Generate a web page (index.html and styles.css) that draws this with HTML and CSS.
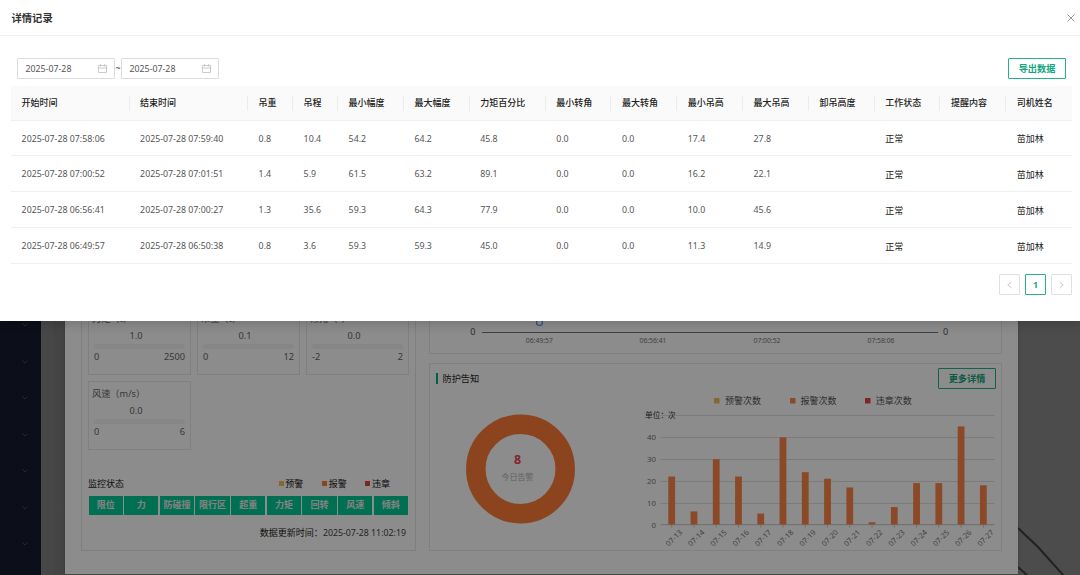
FILE: index.html
```
<!DOCTYPE html>
<html>
<head>
<meta charset="utf-8">
<title>详情记录</title>
<link rel="stylesheet" href="styles.css">
</head>
<body>
<div class="page">
  <div class="sidebar">
    <svg class="arrow" viewBox="0 0 6 4"><path d="M.5.5 3 3 5.500.5"/></svg>
    <svg class="arrow" viewBox="0 0 6 4"><path d="M.5.5 3 3 5.500.5"/></svg>
    <svg class="arrow" viewBox="0 0 6 4"><path d="M.5.5 3 3 5.500.5"/></svg>
    <svg class="arrow" viewBox="0 0 6 4"><path d="M.5.5 3 3 5.500.5"/></svg>
    <svg class="arrow" viewBox="0 0 6 4"><path d="M.5.5 3 3 5.500.5"/></svg>
    <svg class="arrow" viewBox="0 0 6 4"><path d="M.5.5 3 3 5.500.5"/></svg>
    <svg class="arrow" viewBox="0 0 6 4"><path d="M.5.5 3 3 5.500.5"/></svg>
  </div>
  <div class="stage">
    <div class="panel">
      <div class="monitor">
        <div class="cards">
          <div class="card"><div class="name">力矩（t）</div><div class="value">1.0</div><div class="bar"></div><div class="range"><span>0</span><span>2500</span></div></div>
          <div class="card"><div class="name">吊重（t）</div><div class="value">0.1</div><div class="bar"></div><div class="range"><span>0</span><span>12</span></div></div>
          <div class="card"><div class="name">倾角（°）</div><div class="value">0.0</div><div class="bar"></div><div class="range"><span>-2</span><span>2</span></div></div>
          <div class="card"><div class="name">风速（m/s）</div><div class="value">0.0</div><div class="bar"></div><div class="range"><span>0</span><span>6</span></div></div>
        </div>
        <div class="statehead">
          <span>监控状态</span>
          <div class="legend">
            <span><i class="yellow"></i>预警</span>
            <span><i class="orange"></i>报警</span>
            <span><i class="red"></i>违章</span>
          </div>
        </div>
        <div class="states">
          <span>限位</span><span>力</span><span>防碰撞</span><span>限行区</span><span>超重</span><span>力矩</span><span>回转</span><span>风速</span><span>倾斜</span>
        </div>
        <div class="update">数据更新时间：<span>2025-07-28 11:02:19</span></div>
      </div>
      <div class="right">
        <div class="box trend">
          <svg width="572" height="54" viewBox="430 300 572 54">
            <circle class="dot" cx="539.500" cy="323.500" r="3"/>
            <path class="axis" d="M482 333.500H938"/>
            <text class="num" x="475.500" y="336" text-anchor="end">0</text>
            <text class="num" x="943" y="336">0</text>
            <g class="time" text-anchor="middle">
              <text x="539.300" y="344.300">06:49:57</text>
              <text x="653" y="344.300">06:56:41</text>
              <text x="767" y="344.300">07:00:52</text>
              <text x="881" y="344.300">07:58:06</text>
            </g>
          </svg>
        </div>
        <div class="box notice">
          <div class="noticehead"><span class="title">防护告知</span><button class="btn more">更多详情</button></div>
          <svg class="charts" width="571" height="158" viewBox="430 392 571 158">
            <circle class="ring" cx="520.500" cy="469" r="44.700"/>
            <text class="total" x="517.500" y="464" text-anchor="middle">8</text>
            <text class="today" x="517.500" y="479.500" text-anchor="middle">今日告警</text>
            <rect class="yellow" x="714" y="398" width="5.500" height="5.500"/>
            <rect class="orange" x="790" y="398" width="5.500" height="5.500"/>
            <rect class="red" x="865" y="398" width="5.500" height="5.500"/>
            <g class="key">
              <text x="725" y="403.500">预警次数</text>
              <text x="800.500" y="403.500">报警次数</text>
              <text x="875.700" y="403.500">违章次数</text>
            </g>
            <path class="grid" d="M660.500 415.500H994.500M660.500 437.500H994.500M660.500 459.500H994.500M660.500 481.500H994.500M660.500 503.500H994.500"/>
            <text class="unit" x="645" y="418">单位：次</text>
            <g class="tick" text-anchor="end">
              <text x="656" y="440">40</text><text x="656" y="462">30</text><text x="656" y="484">20</text><text x="656" y="506">10</text><text x="656" y="527.500">0</text>
            </g>
            <path class="axis2" d="M660.500 524.700H994.500"/>
            <g id="bars"></g>
          </svg>
        </div>
      </div>
    </div>
    <svg class="wires" width="62" height="50" viewBox="1018 525 62 50"><path d="M1018 528 1038 547 1064 576M1018 567 1028 576"/></svg>
  </div>

  <div class="mask"></div>

  <div class="drawer">
    <div class="drawerhead">
      <span>详情记录</span>
      <svg class="close" viewBox="0 0 8 8"><path d="M.5.5 7.500 7.500M7.500.5.5 7.500"/></svg>
    </div>
    <div class="drawerbody">
      <div class="filters">
        <div class="date">2025-07-28<svg viewBox="0 0 9 9"><path d="M.5 1.500H8.500V8.500H.5ZM.5 4H8.500M2.500.2V2.500M6.500.2V2.500"/></svg></div>
        <span class="tilde">~</span>
        <div class="date">2025-07-28<svg viewBox="0 0 9 9"><path d="M.5 1.500H8.500V8.500H.5ZM.5 4H8.500M2.500.2V2.500M6.500.2V2.500"/></svg></div>
        <button class="btn export">导出数据</button>
      </div>
      <table class="records">
        <colgroup>
          <col class="c-time"><col class="c-time"><col class="c-small"><col class="c-small"><col><col><col class="c-pct"><col><col><col><col><col><col><col><col>
        </colgroup>
        <thead>
          <tr><th>开始时间</th><th>结束时间</th><th>吊重</th><th>吊程</th><th>最小幅度</th><th>最大幅度</th><th>力矩百分比</th><th>最小转角</th><th>最大转角</th><th>最小吊高</th><th>最大吊高</th><th>卸吊高度</th><th>工作状态</th><th>提醒内容</th><th>司机姓名</th></tr>
        </thead>
        <tbody>
          <tr><td>2025-07-28 07:58:06</td><td>2025-07-28 07:59:40</td><td>0.8</td><td>10.4</td><td>54.2</td><td>64.2</td><td>45.8</td><td>0.0</td><td>0.0</td><td>17.4</td><td>27.8</td><td></td><td>正常</td><td></td><td>苗加林</td></tr>
          <tr><td>2025-07-28 07:00:52</td><td>2025-07-28 07:01:51</td><td>1.4</td><td>5.9</td><td>61.5</td><td>63.2</td><td>89.1</td><td>0.0</td><td>0.0</td><td>16.2</td><td>22.1</td><td></td><td>正常</td><td></td><td>苗加林</td></tr>
          <tr><td>2025-07-28 06:56:41</td><td>2025-07-28 07:00:27</td><td>1.3</td><td>35.6</td><td>59.3</td><td>64.3</td><td>77.9</td><td>0.0</td><td>0.0</td><td>10.0</td><td>45.6</td><td></td><td>正常</td><td></td><td>苗加林</td></tr>
          <tr><td>2025-07-28 06:49:57</td><td>2025-07-28 06:50:38</td><td>0.8</td><td>3.6</td><td>59.3</td><td>59.3</td><td>45.0</td><td>0.0</td><td>0.0</td><td>11.3</td><td>14.9</td><td></td><td>正常</td><td></td><td>苗加林</td></tr>
        </tbody>
      </table>
      <div class="pager">
        <span class="off"><svg viewBox="0 0 5 8"><path d="M4.500 1 .8 4 4.500 7"/></svg></span>
        <span class="on">1</span>
        <span class="off"><svg viewBox="0 0 5 8"><path d="M.5 1 4.200 4 .5 7"/></svg></span>
      </div>
    </div>
  </div>
</div>
<script>
var counts = [22, 6, 30, 22, 5, 40, 24, 21, 17, 1, 8, 19, 19, 45, 18]
var out = ''
for (var i = 0; i < counts.length; i++) {
    var x = 671.7 + i * 22.26
    var h = counts[i] * 2.18
    out += '<rect class="orange" x="' + (x - 3.4) + '" y="' + (524.5 - h) + '" width="6.800" height="' + h + '"/>'
    out += '<path class="axis2" d="M' + x + ' 525v2.500"/>'
    out += '<text class="day" text-anchor="end" transform="translate(' + (x + 11) + ' 533) rotate(-45)">07-' + (13 + i) + '</text>'
}
document.getElementById('bars').innerHTML = out
</script>
</body>
</html>
```
FILE: styles.css
```
* {
    box-sizing: border-box;
}
body {
    margin: 0;
    font-family: "Noto Sans", "Noto Sans CJK SC", sans-serif;
    font-size: 8.8px;
    color: #333;
}
svg {
    display: block;
    fill: none;
}
.page {
    position: relative;
    display: flex;
    width: 1080px;
    height: 575px;
    overflow: hidden;
    background: #8a8a8a;
}
.sidebar {
    width: 41px;
    background: #171a30;
    padding: 323px 0 0 22px;
    display: flex;
    flex-direction: column;
    gap: 32.5px;
}
.arrow {
    width: 6px;
    height: 4px;
    flex: none;
    stroke: #46495c;
}
.stage {
    flex: 1;
    position: relative;
    padding-left: 24px;
    background: linear-gradient(90deg, #818388 0, #818284 10px, #7d7d7d 14px, #7b7b7b 24px, #8a8a8a 30px);
}
.wires {
    position: absolute;
    right: 0;
    bottom: 0;
    stroke: #3c3e42;
    stroke-width: 2;
}
.panel {
    width: 953px;
    height: 574px;
    background: #fff;
    padding: 0 16px 23px;
    display: flex;
    gap: 13px;
    box-shadow: 0 0 2px #666;
}

/* left column */
.monitor {
    width: 335px;
    border: 1px solid #e6e9ea;
    padding: 305px 6px 0;
    font-size: 9px;
}
.cards {
    display: grid;
    grid-template-columns: repeat(3, 103px);
    gap: 6px;
}
.card {
    height: 69px;
    border: 1px solid #e4ebeb;
    padding: 3px 5px 0;
    color: #666;
    font-size: 9.200px;
}
.name {
    margin-left: -2px;
    line-height: 17px;
    white-space: nowrap;
}
.value {
    text-align: center;
    line-height: 17px;
    margin-right: 7px;
}
.bar {
    height: 5px;
    border-radius: 3px;
    background: #f5f5f5;
}
.range {
    display: flex;
    justify-content: space-between;
    line-height: 16px;
}
.statehead {
    display: flex;
    justify-content: space-between;
    align-items: center;
    height: 16px;
    margin-top: 25px;
    padding-right: 19px;
    color: #222;
}
.legend {
    display: flex;
    gap: 18.800px;
}
.legend span {
    display: flex;
    align-items: center;
}
.legend i {
    width: 5px;
    height: 5px;
    margin-right: 1.500px;
}
.yellow {
    background: #f9b95a;
    fill: #f9b95a;
}
.orange {
    background: #ff7d3a;
    fill: #ff8548;
}
.red {
    background: #e24848;
    fill: #e24848;
}
.states {
    display: grid;
    grid-template-columns: repeat(9, 1fr);
    gap: 1.300px;
    margin: 5px 0 0 0.500px;
    width: 319.500px;
}
.states span {
    height: 18.500px;
    line-height: 18.500px;
    text-align: center;
    white-space: nowrap;
    font-weight: bold;
    color: #eee;
    background: #00cb96;
}
.update {
    margin-top: 9px;
    padding-right: 3px;
    text-align: right;
    line-height: 17px;
    color: #222;
}
.update span {
    font-size: 8.800px;
    color: #444;
}

/* right column */
.right {
    width: 573px;
    display: flex;
    flex-direction: column;
    gap: 9px;
}
.box {
    border: 1px solid #e9e9e9;
}
.trend {
    height: 354px;
    border-top: 0;
    padding-top: 299px;
}
.notice {
    flex: 1;
}
.noticehead {
    display: flex;
    justify-content: space-between;
    align-items: center;
    height: 28px;
    padding: 0 5px 0 6px;
}
.title {
    border-left: 2.500px solid #00b083;
    padding-left: 4.500px;
    line-height: 11px;
    font-size: 9.200px;
    color: #222;
}
.dot {
    stroke: #5b8ff9;
    stroke-width: 1.200;
}
.axis {
    stroke: #777;
}
.axis2 {
    stroke: #c8c8c8;
}
.num {
    fill: #555;
    font-size: 9px;
}
.time {
    fill: #777;
    font-size: 6.800px;
}
.ring {
    stroke: #ff7d3a;
    stroke-width: 19.500;
}
.total {
    fill: #f0414c;
    font-size: 12.500px;
    font-weight: bold;
}
.today {
    fill: #b0b0b0;
    font-size: 8px;
}
.key {
    fill: #555;
    font-size: 9px;
}
.grid {
    stroke: #e0e0e0;
}
.unit {
    fill: #333;
    font-size: 7.700px;
}
.tick {
    fill: #777;
    font-size: 7.800px;
}
.day {
    fill: #777;
    font-size: 7.500px;
}

.mask {
    position: absolute;
    inset: 0;
    background: rgba(0, 0, 0, 0.45);
}

/* drawer */
.drawer {
    position: absolute;
    top: 0;
    left: 0;
    width: 100%;
    height: 321px;
    background: #fff;
    box-shadow: 0 4px 9px rgba(0, 0, 0, 0.150);
}
.drawerhead {
    height: 35.500px;
    border-bottom: 1px solid #f0f0f0;
    padding: 0 5.500px 0 11.500px;
    display: flex;
    justify-content: space-between;
    align-items: center;
    font-size: 10.300px;
    font-weight: bold;
    color: #333;
}
.close {
    width: 8px;
    height: 8px;
    margin-top: 1px;
    stroke: #888;
    stroke-width: 0.900;
}
.drawerbody {
    padding: 22px 8px 0 11px;
}
.filters {
    display: flex;
    align-items: center;
    height: 21px;
    padding: 0 6px;
}
.date {
    width: 98px;
    height: 21px;
    border: 1px solid #dcdcdc;
    border-radius: 1px;
    padding: 1px 7px 0 7.500px;
    display: flex;
    align-items: center;
    justify-content: space-between;
    color: #555;
}
.date svg {
    width: 9px;
    height: 9px;
    stroke: #c4c4c4;
    stroke-width: 0.900;
}
.tilde {
    width: 6px;
    text-align: center;
}
.btn {
    width: 58px;
    height: 21px;
    padding: 0;
    border: 1px solid #23b08b;
    border-radius: 1px;
    background: none;
    color: #12a67f;
    font-family: inherit;
    font-size: 9.200px;
    font-weight: bold;
}
.export {
    margin-left: auto;
}
.records {
    width: 1061px;
    margin-top: 7px;
    table-layout: fixed;
    border-collapse: separate;
    border-spacing: 0;
    color: #555;
}
.c-time {
    width: 118.500px;
}
.c-small {
    width: 45px;
}
.c-pct {
    width: 76px;
}
.records th, .records td {
    padding: 0 0 0 10.600px;
    text-align: left;
    white-space: nowrap;
    border-bottom: 1px solid #f0f0f0;
}
.records th {
    position: relative;
    height: 35px;
    font-size: 9px;
    font-weight: 500;
    color: #222;
    background: #fafafa;
}
.records td {
    height: 35.800px;
    padding-top: 1.500px;
}
.records td:nth-child(13), .records td:nth-child(15) {
    font-size: 9px;
    color: #222;
}
.records th:not(:last-child)::after {
    content: "";
    position: absolute;
    right: 0;
    top: 10px;
    width: 1px;
    height: 15px;
    background: #ececec;
}
.pager {
    display: flex;
    justify-content: flex-end;
    gap: 5px;
    margin-top: 10.500px;
}
.pager span {
    width: 21px;
    height: 21px;
    border: 1px solid #e0e0e0;
    border-radius: 1px;
    display: flex;
    align-items: center;
    justify-content: center;
}
.pager svg {
    width: 5px;
    height: 8px;
    stroke: #c4c4c4;
    stroke-width: 0.900;
}
.pager .on {
    border-color: #23b08b;
    color: #12a67f;
    font-weight: bold;
}
```
